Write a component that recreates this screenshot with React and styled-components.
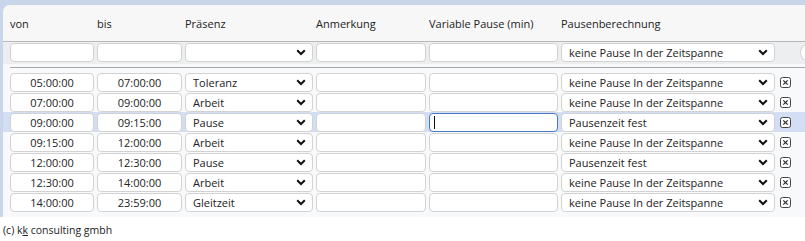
import styled, { createGlobalStyle } from "styled-components";

const GlobalStyle = createGlobalStyle`
  html, body {
    margin: 0;
    padding: 0;
    background: #ffffff;
    overflow: hidden;
  }
  body {
    font-family: "Open Sans", "Noto Sans", sans-serif;
    color: #222;
  }
`;

const columns = "84px 85px 128px 110px 129px 214px 22px";

const rows = [
  { von: "05:00:00", bis: "07:00:00", praesenz: "Toleranz", calc: "keine Pause In der Zeitspanne" },
  { von: "07:00:00", bis: "09:00:00", praesenz: "Arbeit", calc: "keine Pause In der Zeitspanne" },
  { von: "09:00:00", bis: "09:15:00", praesenz: "Pause", calc: "Pausenzeit fest", active: true },
  { von: "09:15:00", bis: "12:00:00", praesenz: "Arbeit", calc: "keine Pause In der Zeitspanne" },
  { von: "12:00:00", bis: "12:30:00", praesenz: "Pause", calc: "Pausenzeit fest" },
  { von: "12:30:00", bis: "14:00:00", praesenz: "Arbeit", calc: "keine Pause In der Zeitspanne" },
  { von: "14:00:00", bis: "23:59:00", praesenz: "Gleitzeit", calc: "keine Pause In der Zeitspanne" },
];

const praesenzOptions = ["", "Toleranz", "Arbeit", "Pause", "Gleitzeit"];
const calcOptions = ["keine Pause In der Zeitspanne", "Pausenzeit fest"];

function App() {
  return (
    <>
      <GlobalStyle />
      <Frame>
        <Panel>
          <HeaderRow>
            <HeadCell>von</HeadCell>
            <HeadCell>bis</HeadCell>
            <HeadCell>Präsenz</HeadCell>
            <HeadCell>Anmerkung</HeadCell>
            <HeadCell>Variable Pause (min)</HeadCell>
            <HeadCell>Pausenberechnung</HeadCell>
          </HeaderRow>

          <FilterRow>
            <Field />
            <Field />
            <DropDown options={praesenzOptions} value="" />
            <Field />
            <Field />
            <DropDown options={calcOptions} value="keine Pause In der Zeitspanne" />
            <FilterButton />
          </FilterRow>

          <Divider />

          {rows.map((r, i) => (
            <DataRow key={i} $active={r.active}>
              <Field $center defaultValue={r.von} />
              <Field $center defaultValue={r.bis} />
              <DropDown options={praesenzOptions} value={r.praesenz} />
              <Field />
              {r.active ? (
                <FocusWrap>
                  <Field $focused />
                </FocusWrap>
              ) : (
                <Field />
              )}
              <DropDown options={calcOptions} value={r.calc} />
              <RemoveButton title="löschen">
                <svg width="11" height="11" viewBox="0 0 11 11">
                  <rect x="0.5" y="0.5" width="10" height="10" rx="2" fill="#fff" stroke="#444" />
                  <path d="M3.3 3.3 L7.7 7.7 M7.7 3.3 L3.3 7.7" stroke="#222" strokeWidth="1.1" />
                </svg>
              </RemoveButton>
            </DataRow>
          ))}
        </Panel>
      </Frame>
      <Footer>
        (c) k<u>k</u> consulting gmbh
      </Footer>
    </>
  );
}

function DropDown({ options, value }) {
  return (
    <SelectWrap>
      <Select defaultValue={value}>
        {options.map((o) => (
          <option key={o} value={o}>
            {o}
          </option>
        ))}
      </Select>
      <Chevron width="10" height="7" viewBox="0 0 10 7">
        <path d="M1.2 1.2 L5 5 L8.8 1.2" fill="none" stroke="#111" strokeWidth="2" />
      </Chevron>
    </SelectWrap>
  );
}

export default App;

const Frame = styled.div`
  background: #c9d5e9;
  padding: 5px 0 0 3px;
`;

const Panel = styled.div`
  background: #f8f9fa;
  border-top-left-radius: 7px;
  padding-bottom: 5px;
  overflow: hidden;
`;

const HeaderRow = styled.div`
  display: grid;
  grid-template-columns: ${columns};
  column-gap: 3px;
  align-items: center;
  height: 36px;
  padding-left: 7px;
  background: #f7f7f8;
  border-bottom: 1px solid #b8b8b8;
  box-shadow: 0 1px 1px rgba(0, 0, 0, 0.08);
`;

const HeadCell = styled.div`
  font-size: 11px;
  color: #222;
  white-space: nowrap;
`;

const FilterRow = styled.div`
  display: grid;
  grid-template-columns: ${columns} 40px;
  column-gap: 3px;
  align-items: center;
  padding: 1px 0 2px 7px;
  background: #eceef0;
`;

const Divider = styled.div`
  margin: 3px 0 4px 7px;
  border-top: 1px solid #a9a9a9;
`;

const DataRow = styled.div`
  display: grid;
  grid-template-columns: ${columns};
  column-gap: 3px;
  align-items: center;
  height: 20px;
  padding-left: 7px;
  background: ${(p) => (p.$active ? "#d3ddf3" : "transparent")};
`;

const Field = styled.input`
  display: block;
  box-sizing: border-box;
  width: 100%;
  height: 19px;
  margin: 0;
  padding: 0 7px;
  border: 1px solid ${(p) => (p.$focused ? "#4a78c9" : "#d2d2d2")};
  border-radius: 4px;
  background: #fff;
  font-family: "Open Sans", "Noto Sans", sans-serif;
  font-size: 11px;
  color: #222;
  text-align: ${(p) => (p.$center ? "center" : "left")};
  outline: none;
`;

const FocusWrap = styled.div`
  position: relative;
  height: 19px;
  &::after {
    content: "";
    position: absolute;
    left: 5px;
    top: 3px;
    width: 1px;
    height: 13px;
    background: #111;
  }
`;

const SelectWrap = styled.div`
  position: relative;
  height: 19px;
`;

const Select = styled.select`
  display: block;
  box-sizing: border-box;
  width: 100%;
  height: 19px;
  margin: 0;
  padding: 0 20px 0 7px;
  line-height: 17px;
  border: 1px solid #d2d2d2;
  border-radius: 4px;
  background: #fff;
  font-family: "Open Sans", "Noto Sans", sans-serif;
  font-size: 11px;
  color: #222;
  appearance: none;
  -webkit-appearance: none;
  outline: none;
`;

const Chevron = styled.svg`
  position: absolute;
  right: 7px;
  top: 6px;
  pointer-events: none;
`;

const FilterButton = styled.div`
  box-sizing: border-box;
  height: 19px;
  margin-left: 22px;
  width: 40px;
  border: 1px solid #d2d2d2;
  border-radius: 10px;
  background: #fff;
`;

const RemoveButton = styled.div`
  display: flex;
  align-items: center;
  padding-left: 2px;
  height: 19px;
  cursor: pointer;
`;

const Footer = styled.div`
  padding: 6px 0 0 3px;
  font-size: 10.5px;
  color: #222;
  u {
    text-underline-offset: 1px;
  }
`;
